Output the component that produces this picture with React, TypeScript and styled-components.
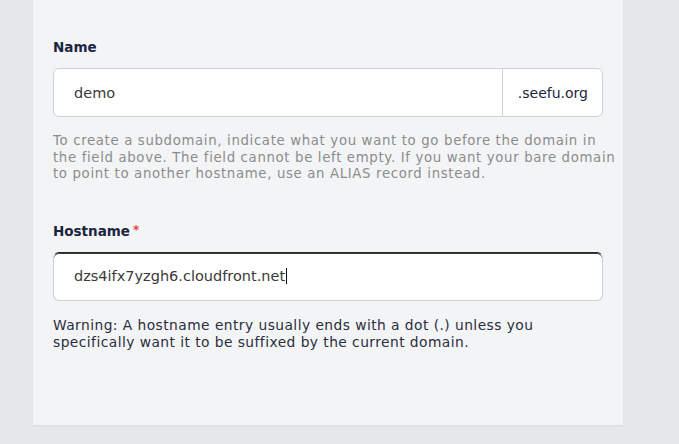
import * as React from "react";
import styled, { createGlobalStyle } from "styled-components";

const GlobalStyle = createGlobalStyle`
  body {
    margin: 0;
    background: #e5e8eb;
    font-family: "DejaVu Sans", "Open Sans", sans-serif;
  }
`;

const SPage = styled.div`
  height: 444px;
  padding-left: 33px;
  overflow: hidden;
`;

const SCard = styled.div`
  width: 590px;
  height: 425px;
  box-sizing: border-box;
  padding: 38px 20px 0;
  background: #f3f4f6;
  box-shadow: 0 1px 2px rgba(0, 0, 0, 0.06);
`;

const SField = styled.div`
  display: flex;
  flex-direction: column;
  margin-bottom: 39px;
`;

const SLabel = styled.label`
  display: flex;
  align-items: flex-start;
  gap: 3px;
  font-size: 13.5px;
  font-weight: 600;
  color: #1b2540;
  line-height: 18px;
  margin-bottom: 12px;
`;

const SRequired = styled.span`
  color: #e0483e;
  font-size: 12px;
  line-height: 16px;
`;

interface InputStyle {
  focused?: boolean;
}

const SInputGroup = styled.div<InputStyle>`
  display: flex;
  height: 49px;
  box-sizing: border-box;
  background: #fff;
  border: 1px solid #cfd1d4;
  border-top-color: ${({ focused }) => (focused ? "#2a2a2a" : "#cfd1d4")};
  box-shadow: ${({ focused }) =>
    focused ? "inset 0 1px 0 #3a3a3a" : "none"};
  border-radius: 6px;
  overflow: hidden;
`;

const SValue = styled.div`
  flex: 1;
  display: flex;
  align-items: center;
  padding-left: 20px;
  font-size: 14.5px;
  color: #3a3a3a;
`;

const SCaret = styled.span`
  display: inline-block;
  width: 1px;
  height: 16px;
  background: #111;
  margin-left: 1px;
`;

const SAddon = styled.div`
  display: flex;
  align-items: center;
  padding: 0 14px 0 15px;
  border-left: 1px solid #cfd1d4;
  font-size: 14px;
  color: #1b2540;
`;

const SHelp = styled.p<{ muted?: boolean }>`
  margin: 16px 0 0;
  white-space: nowrap;
  font-size: ${({ muted }) => (muted ? "13.3px" : "13.8px")};
  letter-spacing: ${({ muted }) => (muted ? "0.65px" : "0.45px")};
  line-height: ${({ muted }) => (muted ? "16.5px" : "17px")};
  color: ${({ muted }) => (muted ? "#8c8c8c" : "#2a2e3c")};
`;

const App = () => (
  <SPage>
    <GlobalStyle />
    <SCard>
      <SField>
        <SLabel>Name</SLabel>
        <SInputGroup>
          <SValue>demo</SValue>
          <SAddon>.seefu.org</SAddon>
        </SInputGroup>
        <SHelp muted>
          To create a subdomain, indicate what you want to go before the domain in
          <br />
          the field above. The field cannot be left empty. If you want your bare domain
          <br />
          to point to another hostname, use an ALIAS record instead.
        </SHelp>
      </SField>
      <SField>
        <SLabel>
          Hostname<SRequired>*</SRequired>
        </SLabel>
        <SInputGroup focused>
          <SValue>
            dzs4ifx7yzgh6.cloudfront.net
            <SCaret />
          </SValue>
        </SInputGroup>
        <SHelp>
          Warning: A hostname entry usually ends with a dot (.) unless you
          <br />
          specifically want it to be suffixed by the current domain.
        </SHelp>
      </SField>
    </SCard>
  </SPage>
);

export default App;
